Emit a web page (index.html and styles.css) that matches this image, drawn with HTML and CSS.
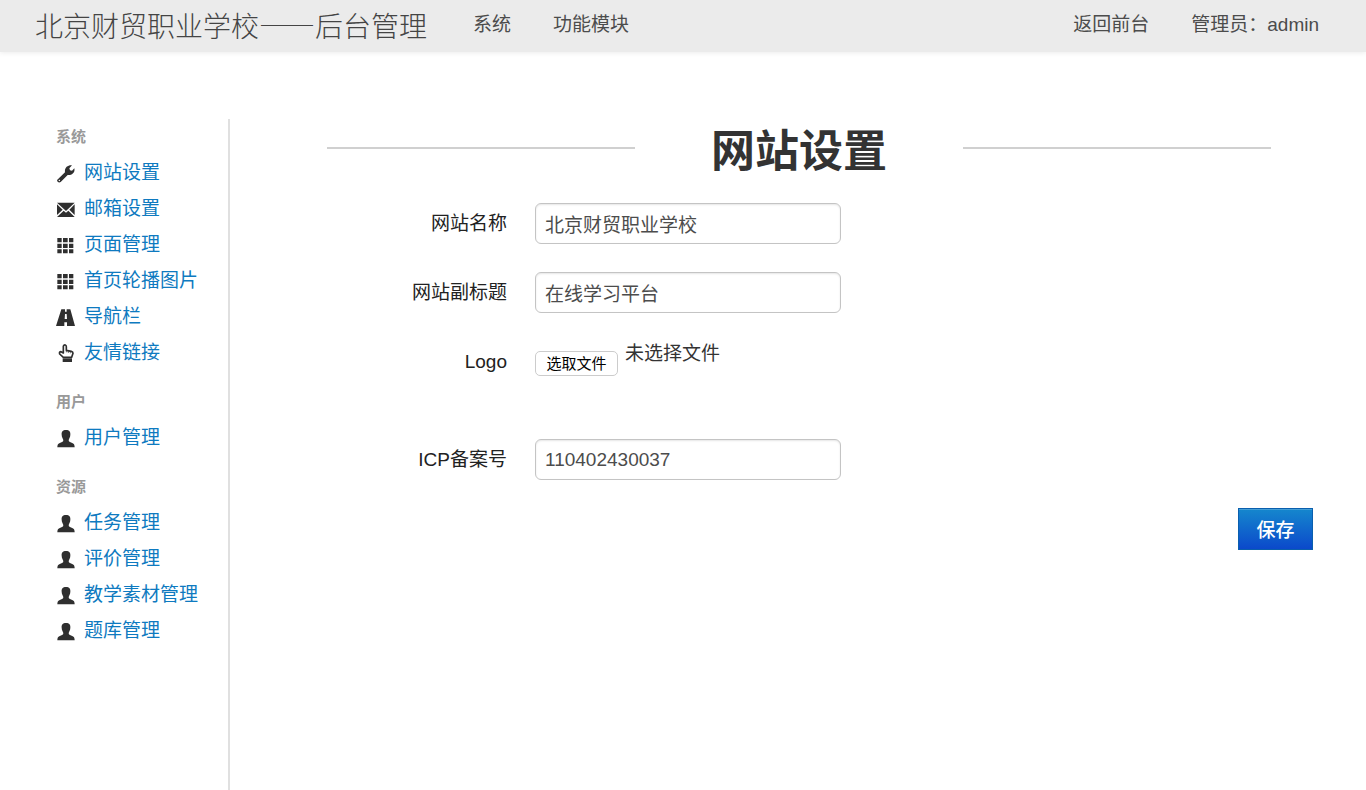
FILE: index.html
```html
<!DOCTYPE html>
<html lang="zh-CN">
<head>
<meta charset="utf-8">
<meta name="viewport" content="width=device-width, initial-scale=1">
<title>网站设置</title>
<link rel="stylesheet" href="styles.css">
</head>
<body>
<svg class="sprite" aria-hidden="true">
  <symbol id="wrench" viewBox="0 0 57 57"><path d="M4 47 27 25C25 12 34 3 48 4L40 13 42 19 48 20 55 13C58 26 47 35 35 33L14 54Q9 57 5 53 2 50 4 47ZM10 47a2 2 0 1 0 .1 0Z" fill-rule="evenodd"/></symbol>
  <symbol id="mail" viewBox="0 0 57 57"><path d="M3 8H56L30 33ZM3 13 20 29 3 45ZM56 13V45L40 29ZM3 51 23 32 30 38 37 32 56 51Z"/></symbol>
  <symbol id="grid" viewBox="0 0 57 57"><path d="M4 6h13v13H4ZM21 6h14v13H21ZM39 6h13v13H39ZM4 23h13v13H4ZM21 23h14v13H21ZM39 23h13v13H39ZM4 40h13v12H4ZM21 40h14v12H21ZM39 40h13v12H39Z"/></symbol>
  <symbol id="road" viewBox="0 0 57 57"><path d="M16 4H27V11H32V4H43L57 54H33V43H25V54H0ZM27 18 26 33H33L32 18Z" fill-rule="evenodd"/></symbol>
  <symbol id="hand" viewBox="0 0 57 57"><path d="M22 40 11 30Q9 23 15 23L22 27V7Q23 2 28 3 31 4 31 8V19L46 22Q51 23 51 28L47 40Z" fill="none" stroke="currentColor" stroke-width="5" stroke-linejoin="round"/><path d="M31 19v6M37 21v6M43 23v5" stroke="currentColor" stroke-width="2"/><path d="M20 43H48V54H20Z"/></symbol>
  <symbol id="user" viewBox="0 0 57 57"><path d="M30 3C40 3 44 9 43 17 43 25 39 28 38 33 38 39 42 39 47 41 54 43 56 47 56 55H4C4 47 6 43 13 41 18 39 22 39 22 33 21 28 17 25 17 17 16 9 20 3 30 3Z"/></symbol>
</svg>
<header class="topbar">
  <a class="brand" href="#">北京财贸职业学校——后台管理</a>
  <nav class="menu">
    <a href="#">系统</a>
    <a href="#">功能模块</a>
  </nav>
  <nav class="menu menu-right">
    <a href="#">返回前台</a>
    <a href="#">管理员：admin</a>
  </nav>
</header>
<div class="page">
  <aside class="sidebar">
    <section class="group">
      <h2>系统</h2>
      <a href="#"><svg class="icon"><use href="#wrench"/></svg>网站设置</a>
      <a href="#"><svg class="icon"><use href="#mail"/></svg>邮箱设置</a>
      <a href="#"><svg class="icon"><use href="#grid"/></svg>页面管理</a>
      <a href="#"><svg class="icon"><use href="#grid"/></svg>首页轮播图片</a>
      <a href="#"><svg class="icon"><use href="#road"/></svg>导航栏</a>
      <a href="#"><svg class="icon"><use href="#hand"/></svg>友情链接</a>
    </section>
    <section class="group">
      <h2>用户</h2>
      <a href="#"><svg class="icon"><use href="#user"/></svg>用户管理</a>
    </section>
    <section class="group">
      <h2>资源</h2>
      <a href="#"><svg class="icon"><use href="#user"/></svg>任务管理</a>
      <a href="#"><svg class="icon"><use href="#user"/></svg>评价管理</a>
      <a href="#"><svg class="icon"><use href="#user"/></svg>教学素材管理</a>
      <a href="#"><svg class="icon"><use href="#user"/></svg>题库管理</a>
    </section>
  </aside>
  <main class="content">
    <h1 class="title">网站设置</h1>
    <form class="form">
      <div class="row">
        <label for="name">网站名称</label>
        <input class="text" id="name" type="text" value="北京财贸职业学校">
      </div>
      <div class="row">
        <label for="subtitle">网站副标题</label>
        <input class="text" id="subtitle" type="text" value="在线学习平台">
      </div>
      <div class="row row-file">
        <label for="logo">Logo</label>
        <div class="file">
          <input id="logo" type="file" hidden>
          <button class="pick" type="button">选取文件</button>
          <span>未选择文件</span>
        </div>
      </div>
      <div class="row">
        <label for="icp">ICP备案号</label>
        <input class="text" id="icp" type="text" value="110402430037">
      </div>
      <button class="save" type="submit">保存</button>
    </form>
  </main>
</div>
</body>
</html>
```
FILE: styles.css
```css
* {
  box-sizing: border-box;
}

body {
  margin: 0;
  min-height: 100vh;
  display: flex;
  flex-direction: column;
  background: #fff;
  color: #333;
  font-family: "Liberation Sans", "Noto Sans CJK SC", sans-serif;
  font-size: 19px;
}

a {
  text-decoration: none;
}

button,
input {
  font-family: inherit;
}

.sprite {
  position: absolute;
  width: 0;
  height: 0;
}

.topbar {
  display: flex;
  align-items: center;
  height: 52px;
  padding: 0 47px 2px 35px;
  background: #ebebeb;
  box-shadow: 0 1px 5px rgba(0, 0, 0, 0.08);
}

.brand {
  color: #444;
  font-family: "Noto Sans CJK SC", sans-serif;
  font-size: 28px;
  font-weight: 200;
  line-height: 48px;
  white-space: nowrap;
}

.menu {
  display: flex;
  gap: 42px;
  margin-left: 46px;
  line-height: 48px;
  white-space: nowrap;
}

.menu a {
  color: #4c4c4c;
}

.menu-right {
  margin-left: auto;
}

.page {
  flex: 1;
  display: flex;
  padding-top: 67px;
}

.sidebar {
  flex: none;
  width: 230px;
  padding-left: 56px;
  border-right: 2px solid #e0e0e0;
}

.group {
  margin-bottom: 13px;
}

.group h2 {
  margin: 0;
  color: #999;
  font-size: 15px;
  font-weight: 700;
  line-height: 36px;
}

.group a {
  display: flex;
  align-items: center;
  gap: 9px;
  color: #0e7ac0;
  line-height: 36px;
  white-space: nowrap;
}

.icon {
  flex: none;
  width: 19px;
  height: 19px;
  color: #2f2f2f;
  fill: currentColor;
}

.content {
  flex: 1;
  min-width: 0;
}

.title {
  display: flex;
  align-items: center;
  gap: 76px;
  margin: 0 95px 26px 97px;
  color: #333;
  font-family: "Noto Sans CJK SC", sans-serif;
  font-size: 44px;
  line-height: 58px;
  white-space: nowrap;
}

.title::before,
.title::after {
  content: "";
  flex: 1;
  height: 2px;
  background: #d0d0d0;
}

.form {
  display: flex;
  flex-direction: column;
  gap: 28px;
  padding-right: 53px;
}

.row {
  display: grid;
  grid-template-columns: 277px 306px;
  column-gap: 28px;
}

.row label {
  color: #222;
  line-height: 42px;
  text-align: right;
}

.row .text {
  width: 100%;
  height: 41px;
  padding: 0 9px;
  border: 1px solid #c4c4c4;
  border-radius: 6px;
  background: #fff;
  box-shadow: inset 0 1px 2px rgba(0, 0, 0, 0.1);
  color: #4c4c4c;
  font-size: 19px;
}

.row {
  height: 41px;
}

.row-file {
  height: auto;
  min-height: 70px;
}

.file {
  display: flex;
  align-items: flex-start;
  gap: 7px;
  line-height: 25px;
}

.pick {
  width: 83px;
  height: 25px;
  margin-top: 10px;
  padding: 0;
  border: 1px solid #ccc;
  border-radius: 5px;
  background: #fff;
  color: #000;
  font-size: 15px;
  line-height: 23px;
}

.save {
  align-self: flex-end;
  width: 75px;
  height: 42px;
  padding: 0 0 2px;
  border: 1px solid #0a5fae;
  background: linear-gradient(#1587cd, #0b49cb);
  box-shadow: inset 0 1px 0 rgba(255, 255, 255, 0.2);
  color: #fff;
  font-size: 19px;
  font-weight: 500;
}
```
